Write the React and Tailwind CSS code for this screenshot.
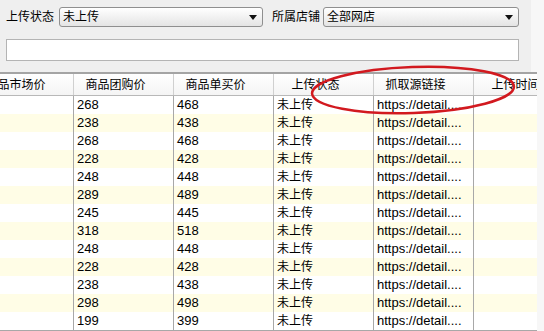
import React from 'react'

const rows = [
  [268, 468], [238, 438], [268, 468], [228, 428], [248, 448], [289, 489], [245, 445],
  [318, 518], [248, 448], [228, 428], [238, 438], [298, 498], [199, 399],
]

const headers = ['商品市场价', '商品团购价', '商品单买价', '上传状态', '抓取源链接', '上传时间']

function Select({ value, width }) {
  return (
    <div
      className={`${width} h-[20px] flex items-center justify-between rounded-[3px] border border-[#8f8f8f] bg-gradient-to-b from-white to-[#e4e4e4] pl-[3px] pr-[5px]`}
    >
      <span className="text-[12px] leading-none text-black">{value}</span>
      <svg width="8" height="5" viewBox="0 0 8 5">
        <path d="M0 0h8L4 5z" fill="#111" />
      </svg>
    </div>
  )
}

export default function App() {
  return (
    <div className="relative w-[544px] h-[331px] overflow-hidden bg-[#f7f7f7] font-['Liberation_Sans','Noto_Sans_CJK_SC',sans-serif] text-black">
      {/* Filter bar */}
      <div className="w-[531px] h-[72px] bg-[#efefef] pt-[7px] pl-[6px]">
        <div className="flex items-center h-[20px]">
          <span className="w-[53px] text-[12px] leading-none">上传状态</span>
          <Select value="未上传" width="w-[204px]" />
          <span className="ml-[9px] w-[51px] text-[12px] leading-none">所属店铺</span>
          <Select value="全部网店" width="w-[196px]" />
        </div>
        <div className="mt-[12px] w-[513px] h-[22px] border border-[#b4b4b4] bg-white" />
      </div>

      {/* Grid */}
      <div className="w-[537px] border-t-2 border-[#a4a4a4] bg-white overflow-hidden">
        <div className="ml-[-26px] w-[600px]">
          <div className="flex h-[22px] border-b border-[#b8b8b8] bg-gradient-to-b from-white to-[#f4f4f4]">
            {headers.map((h) => (
              <div
                key={h}
                className="w-[100px] shrink-0 border-r border-[#d0d0d0] pr-[16px] flex items-center justify-center text-[12px] leading-none"
              >
                {h}
              </div>
            ))}
          </div>
          {rows.map(([group, single], i) => (
            <div key={i} className={`flex h-[18px] ${i % 2 ? 'bg-[#fffde6]' : 'bg-white'}`}>
              <div className="w-[100px] shrink-0 border-r border-[#a8a8a8]" />
              <div className="w-[100px] shrink-0 border-r border-[#a8a8a8] pl-[3px] text-[13px] leading-[18px]">{group}</div>
              <div className="w-[100px] shrink-0 border-r border-[#a8a8a8] pl-[3px] text-[13px] leading-[18px]">{single}</div>
              <div className="w-[100px] shrink-0 border-r border-[#a8a8a8] pl-[3px] text-[12px] leading-[18px]">未上传</div>
              <div className="w-[100px] shrink-0 border-r border-[#a8a8a8] pl-[3px] text-[13px] leading-[18px]">https://detail....</div>
              <div className="w-[100px] shrink-0 border-r border-[#a8a8a8]" />
            </div>
          ))}
          <div className="h-px bg-[#a8a8a8]" />
        </div>
      </div>

      {/* Red annotation ellipse */}
      <svg className="absolute left-0 top-0 pointer-events-none" width="544" height="331">
        <ellipse cx="413" cy="90" rx="101" ry="23" fill="none" stroke="#d2191f" strokeWidth="2.5" transform="rotate(-2 413 90)" />
      </svg>
    </div>
  )
}
